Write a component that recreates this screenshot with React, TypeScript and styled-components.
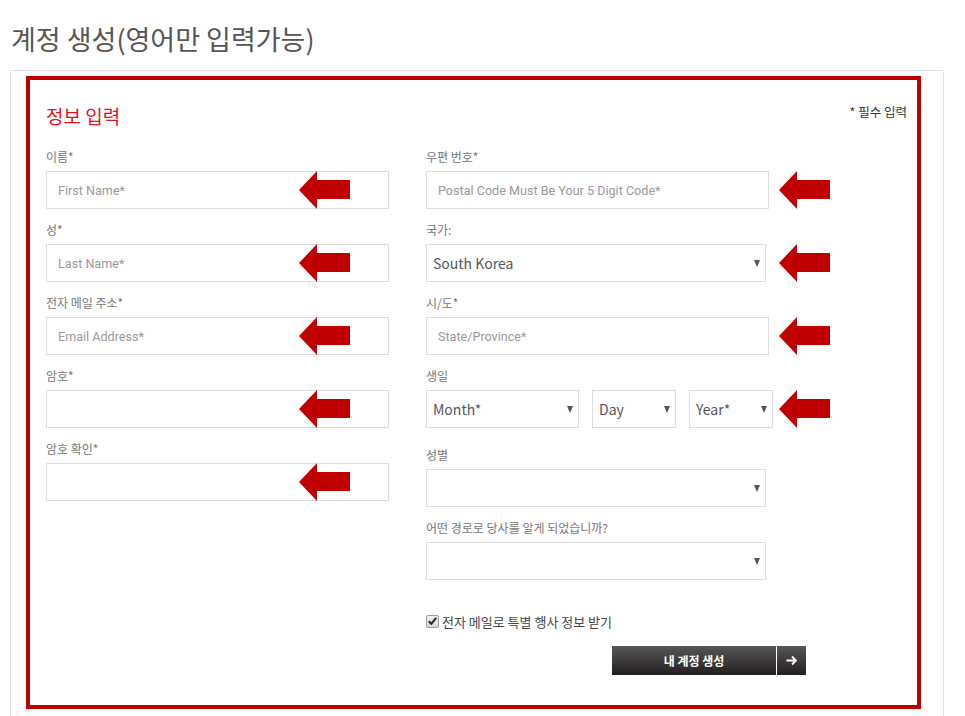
import React from "react";
import styled, { createGlobalStyle } from "styled-components";

const GlobalStyle = createGlobalStyle`
  html, body { margin: 0; padding: 0; background: #fff; }
  body { font-family: "Noto Sans CJK KR", "Noto Sans", sans-serif; }
  * { box-sizing: border-box; }
`;

const Page = styled.div`
  padding: 24px 0 0 10px;
  width: 944px;
`;

const Title = styled.h1`
  margin: 0 0 16px 1px;
  font-size: 27px;
  line-height: 30px;
  font-weight: 400;
  color: #555;
`;

const Panel = styled.div`
  border: 1px solid #e3e3e3;
  padding: 5px 22px 10px 15px;
`;

const Frame = styled.section`
  border: 4px solid #c00000;
  padding: 23px 10px 30px 16px;
`;

const Header = styled.div`
  display: flex;
  justify-content: space-between;
  align-items: flex-start;
  margin-bottom: 19px;
`;

const Heading = styled.h2`
  margin: 0;
  font-size: 19px;
  line-height: 26px;
  font-weight: 400;
  color: #e3101e;
`;

const Required = styled.span`
  font-size: 12.5px;
  line-height: 18px;
  color: #333;
`;

const Columns = styled.div`
  display: flex;
  gap: 37px;
`;

const Column = styled.div`
  display: flex;
  flex-direction: column;
  width: ${(p: { $w: number }) => p.$w}px;
`;

const Field = styled.div<{ $mb?: number }>`
  position: relative;
  margin-bottom: ${(p) => (p.$mb ?? 12)}px;
`;

const Label = styled.div`
  font-size: 12px;
  line-height: 18px;
  color: #777;
  margin-bottom: 5px;
`;

const TextInput = styled.input`
  display: block;
  width: 343px;
  height: 38px;
  border: 1px solid #ddd;
  padding: 0 11px;
  font-family: Roboto, "Liberation Sans", sans-serif;
  font-size: 12.6px;
  color: #333;
  background: #fff;
  outline: none;
  &::placeholder { color: #999; }
`;

const SelectWrap = styled.div<{ $w: number }>`
  position: relative;
  width: ${(p) => p.$w}px;
  height: 38px;
`;

const Select = styled.select`
  appearance: none;
  -webkit-appearance: none;
  width: 100%;
  height: 100%;
  border: 1px solid #ddd;
  border-radius: 0;
  background: #fff;
  padding: 0 20px 0 6px;
  font-family: "Noto Sans CJK KR", "Noto Sans", sans-serif;
  font-size: 14px;
  color: #555;
  outline: none;
`;

const Caret = styled.span`
  position: absolute;
  right: 6px;
  top: 16px;
  width: 0;
  height: 0;
  border-left: 3.5px solid transparent;
  border-right: 3.5px solid transparent;
  border-top: 7px solid #555;
  pointer-events: none;
`;

const DateRow = styled.div`
  display: flex;
  gap: 13px;
`;

const ArrowMark = styled.svg<{ $left: number }>`
  position: absolute;
  left: ${(p) => p.$left}px;
  top: 23px;
  width: 51px;
  height: 38px;
  pointer-events: none;
`;

const CheckRow = styled.label`
  display: flex;
  align-items: center;
  gap: 3px;
  margin-top: 32px;
  height: 18px;
  font-size: 13px;
  color: #444;
  cursor: pointer;
`;

const CheckBox = styled.span`
  display: inline-flex;
  align-items: center;
  justify-content: center;
  width: 13px;
  height: 13px;
  border: 1px solid #9a9a9a;
  border-radius: 2px;
  background: linear-gradient(#f4f4f4, #d8d8d8);
`;

const ButtonRow = styled.div`
  display: flex;
  margin-top: 16px;
  margin-left: 186px;
  height: 29px;
  gap: 1px;
`;

const SubmitButton = styled.button`
  width: 164px;
  height: 29px;
  border: none;
  background: linear-gradient(#585656, #231f20);
  color: #fff;
  font-family: "Noto Sans CJK KR", sans-serif;
  font-size: 12px;
  font-weight: 700;
  cursor: pointer;
`;

const ArrowButton = styled.button`
  width: 29px;
  height: 29px;
  border: none;
  padding: 0;
  display: flex;
  align-items: center;
  justify-content: center;
  background: linear-gradient(#585656, #231f20);
  cursor: pointer;
`;

const Arrow = ({ left }: { left: number }) => (
  <ArrowMark $left={left} viewBox="0 0 51 38">
    <polygon points="0,19 18,0 18,9 51,9 51,28 18,28 18,38" fill="#c00000" />
  </ArrowMark>
);

const Dropdown = ({ w, value }: { w: number; value?: string }) => (
  <SelectWrap $w={w}>
    <Select defaultValue={value ?? ""}>
      <option value={value ?? ""}>{value ?? ""}</option>
    </Select>
    <Caret />
  </SelectWrap>
);

export default function App() {
  return (
    <>
      <GlobalStyle />
      <Page>
        <Title>계정 생성(영어만 입력가능)</Title>
        <Panel>
          <Frame>
            <Header>
              <Heading>정보 입력</Heading>
              <Required>* 필수 입력</Required>
            </Header>
            <Columns>
              <Column $w={343}>
                <Field>
                  <Label>이름*</Label>
                  <TextInput placeholder="First Name*" />
                  <Arrow left={253} />
                </Field>
                <Field>
                  <Label>성*</Label>
                  <TextInput placeholder="Last Name*" />
                  <Arrow left={253} />
                </Field>
                <Field>
                  <Label>전자 메일 주소*</Label>
                  <TextInput placeholder="Email Address*" />
                  <Arrow left={253} />
                </Field>
                <Field>
                  <Label>암호*</Label>
                  <TextInput type="password" />
                  <Arrow left={253} />
                </Field>
                <Field>
                  <Label>암호 확인*</Label>
                  <TextInput type="password" />
                  <Arrow left={253} />
                </Field>
              </Column>
              <Column $w={420}>
                <Field>
                  <Label>우편 번호*</Label>
                  <TextInput placeholder="Postal Code Must Be Your 5 Digit Code*" />
                  <Arrow left={353} />
                </Field>
                <Field>
                  <Label>국가:</Label>
                  <Dropdown w={340} value="South Korea" />
                  <Arrow left={353} />
                </Field>
                <Field>
                  <Label>시/도*</Label>
                  <TextInput placeholder="State/Province*" />
                  <Arrow left={353} />
                </Field>
                <Field $mb={18}>
                  <Label>생일</Label>
                  <DateRow>
                    <Dropdown w={153} value="Month*" />
                    <Dropdown w={84} value="Day" />
                    <Dropdown w={84} value="Year*" />
                  </DateRow>
                  <Arrow left={353} />
                </Field>
                <Field>
                  <Label>성별</Label>
                  <Dropdown w={340} />
                </Field>
                <Field $mb={0}>
                  <Label>어떤 경로로 당사를 알게 되었습니까?</Label>
                  <Dropdown w={340} />
                </Field>
                <CheckRow>
                  <CheckBox>
                    <svg width="9" height="8" viewBox="0 0 9 8">
                      <path d="M0.8 4.2 L3.3 6.8 L8.2 0.9" fill="none" stroke="#222" strokeWidth="2" />
                    </svg>
                  </CheckBox>
                  전자 메일로 특별 행사 정보 받기
                </CheckRow>
                <ButtonRow>
                  <SubmitButton>내 계정 생성</SubmitButton>
                  <ArrowButton>
                    <svg width="12" height="11" viewBox="0 0 12 11">
                      <path d="M0.5 5.5 H10 M6 1.5 L10 5.5 L6 9.5" fill="none" stroke="#fff" strokeWidth="1.8" />
                    </svg>
                  </ArrowButton>
                </ButtonRow>
              </Column>
            </Columns>
          </Frame>
        </Panel>
      </Page>
    </>
  );
}
